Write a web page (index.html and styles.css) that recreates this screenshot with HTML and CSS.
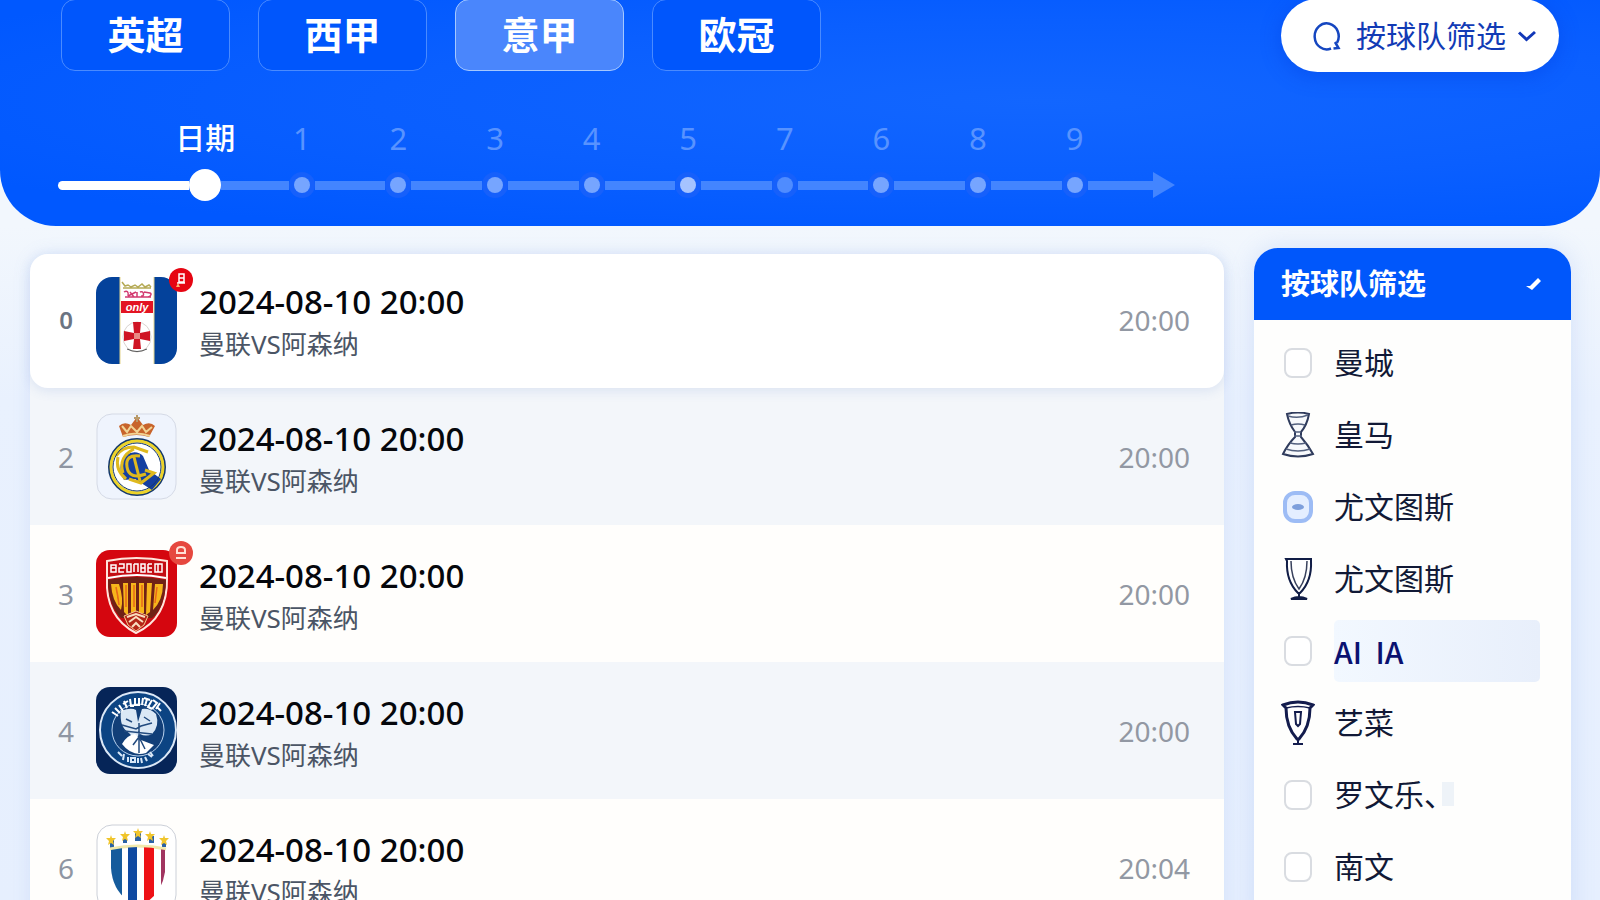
FILE: index.html
```
<!DOCTYPE html>
<html lang="zh-CN">
<head>
    <meta charset="UTF-8">
    <meta name="viewport" content="width=device-width, initial-scale=1.0">
    <title>赛程</title>
    <link rel="stylesheet" href="styles.css">
</head>
<body>
    <header class="top">
        <div class="top-row">
            <nav class="leagues">
                <button class="league">英超</button>
                <button class="league">西甲</button>
                <button class="league active">意甲</button>
                <button class="league">欧冠</button>
            </nav>
            <button class="filter-btn">
                <svg class="search-icon" viewBox="0 0 30 32">
                    <path d="M19 28.500A12 13 0 1 1 25 23" />
                    <path d="M23 22L26.500 28L21.500 28.500" />
                </svg>
                <span>按球队筛选</span>
                <svg class="chevron-icon" viewBox="0 0 20 14"><path d="M2 3.500L9.500 10.500L18 3" /></svg>
            </button>
        </div>

        <div class="timeline">
            <span class="lead"></span>
            <label class="step current"><span>日期</span><span class="rail"><input type="radio" name="day" checked></span></label>
            <label class="step"><span>1</span><span class="rail"><input type="radio" name="day"></span></label>
            <label class="step"><span>2</span><span class="rail"><input type="radio" name="day"></span></label>
            <label class="step"><span>3</span><span class="rail"><input type="radio" name="day"></span></label>
            <label class="step"><span>4</span><span class="rail"><input type="radio" name="day"></span></label>
            <label class="step bright"><span>5</span><span class="rail"><input type="radio" name="day"></span></label>
            <label class="step dim"><span>7</span><span class="rail"><input type="radio" name="day"></span></label>
            <label class="step"><span>6</span><span class="rail"><input type="radio" name="day"></span></label>
            <label class="step"><span>8</span><span class="rail"><input type="radio" name="day"></span></label>
            <label class="step"><span>9</span><span class="rail"><input type="radio" name="day"></span></label>
            <span class="tail"></span>
        </div>
    </header>

    <main class="page">
        <section class="matches">
            <article class="match featured">
                <span class="num">0</span>
                <div class="crest">
                    <svg viewBox="0 0 81 87">
                        <rect width="81" height="87" rx="16" fill="#04429b" />
                        <rect x="24" y="0" width="34" height="87" fill="#fff" />
                        <path d="M24 0V87M58 0V87" stroke="#e3d48c" fill="none" />
                        <path d="M26 5l3 4 3-1 3 2 4-2 3 2 4-3 3 3 4-2 2 2M27 11h28" stroke="#b5aa55" stroke-width="1.500" fill="none" />
                        <path d="M28 15c3-2 5 0 4 4m2-4l4 5m-6-1l8-4m1 0v5m3-5c4-2 5 5 1 4m3-4l6 1c2 1 1 3-2 4M29 20h26" stroke="#d23a70" stroke-width="1.500" fill="none" />
                        <rect x="25" y="24" width="32" height="12" fill="#e31422" />
                        <text x="41" y="34" font-size="11" text-anchor="middle" class="crest-text">only</text>
                        <ellipse cx="41" cy="60" rx="14" ry="15" fill="#fff" stroke="#d9d3cf" />
                        <path d="M37 45h8l-1 11 10-2v10l-10-2 1 10h-8l1-10-10 2V54l10 2z" fill="#cf1424" />
                        <rect x="38" y="56" width="6" height="6" fill="#e98a84" />
                        <path d="M31 72q10 5 20 0" stroke="#555" fill="none" />
                    </svg>
                    <span class="tag">
                        <svg viewBox="0 0 24 24"><path d="M10 6h5v8h-5zM10 10h5M8 15h8" stroke="#fff" stroke-width="1.500" fill="none" /><path d="M9 15l2 4-4 0z" fill="#ffb36b" /></svg>
                    </span>
                </div>
                <div class="info">
                    <h3>2024-08-10 20:00</h3>
                    <p>曼联VS阿森纳</p>
                </div>
                <time>20:00</time>
            </article>

            <article class="match">
                <span class="num">2</span>
                <div class="crest">
                    <svg viewBox="0 0 81 87">
                        <rect x="1" y="1" width="79" height="85" rx="15" fill="#eff4fd" stroke="#d5dae6" />
                        <path d="M27 24L23 13q5-5 12-1l6-8 6 8q7-4 12 1l-6 11q-12-4-26 0z" fill="#c8642b" />
                        <path d="M27 23q13-5 27 0M26 13l5 6 4-6 6 6 5-6 4 6 6-5" stroke="#f2d494" stroke-width="2" fill="none" />
                        <path d="M41 2v7M38 5h6" stroke="#b99b6b" stroke-width="2" />
                        <circle cx="41" cy="54" r="28" fill="#fff" stroke="#15396c" stroke-width="2" />
                        <circle cx="41" cy="54" r="26" fill="none" stroke="#ecd32a" stroke-width="3" />
                        <path d="M30 42q10-6 17 1l6 14 12 9-9 11-17-11-11 1q-8-14 2-25z" fill="#143fa0" />
                        <path d="M20 43q6-9 18-9l14 5M38 36q-16 8-11 24M44 43q-15-2-13 11t19 7M38 44l6 24M33 66l12 4 13-10-9-3" stroke="#dfb91e" stroke-width="3" fill="none" />
                        <path d="M22 44q-3 13 8 22" stroke="#dfb91e" stroke-width="3" fill="none" />
                        <circle cx="41" cy="54" r="24" fill="none" stroke="#15396c" />
                    </svg>
                </div>
                <div class="info">
                    <h3>2024-08-10 20:00</h3>
                    <p>曼联VS阿森纳</p>
                </div>
                <time>20:00</time>
            </article>

            <article class="match">
                <span class="num">3</span>
                <div class="crest">
                    <svg viewBox="0 0 81 87">
                        <rect width="81" height="87" rx="14" fill="#d5060f" />
                        <path d="M11 11q29-6 60 0v17q1 40-31 55Q9 67 11 28z" fill="#c40d13" stroke="#ffe5dc" stroke-width="2" />
                        <path d="M12 30q28-6 58 0-1 28-14 38H25Q12 55 12 30z" fill="#702116" />
                        <path d="M12 28q29-6 58 0" stroke="#fff" stroke-width="2" fill="none" />
                        <path d="M15 15h5v7h-5zm0 3h5M23 14h5v4h-5v4h5M31 14v8h4v-8zM38 14v8m0-8h4v8M45 14h4v8h-4zm0 4h4M52 14v8h4m-4-4h4m-4-4h4M59 14h7v8h-7zm3 0v8" stroke="#fff" stroke-width="1.500" fill="none" />
                        <path d="M15 34h8q5 15 2 26-9-9-10-26zM27 33h5v33l-4-4zM35 33h5v30h-5zM43 33h5v30h-5zM51 33h5l-2 29-4 3zM59 34h8q0 16-10 26z" fill="#f7b51b" />
                        <path d="M20 37q2 9 3 18M30 35v22M38 35v22M46 35v22M61 37l-2 16" stroke="#e8681a" stroke-width="1.500" />
                        <path d="M28 66l12-5 12 5-4 9-8 6-8-6z" fill="#b32516" stroke="#f4c78e" />
                        <path d="M31 67l9-3 9 3M33 72l7-5 7 5M36 77l4-4 4 4" stroke="#f9dec0" stroke-width="2" fill="none" />
                    </svg>
                    <span class="tag soft">
                        <svg viewBox="0 0 24 24"><path d="M8 11V9q0-3 4-3t4 3v2M7 12h10M7 17h10" stroke="#ffe1d6" stroke-width="2" fill="none" /></svg>
                    </span>
                </div>
                <div class="info">
                    <h3>2024-08-10 20:00</h3>
                    <p>曼联VS阿森纳</p>
                </div>
                <time>20:00</time>
            </article>

            <article class="match">
                <span class="num">4</span>
                <div class="crest">
                    <svg viewBox="0 0 81 87">
                        <rect width="81" height="87" rx="14" fill="#062558" />
                        <circle cx="42" cy="43" r="38" fill="#0c4483" stroke="#dbe8f7" stroke-width="2" />
                        <circle cx="42" cy="43" r="26" fill="#123f78" stroke="#b9d2ee" />
                        <path d="M25 24q10-4 15-1l2 12 4-13q8-1 14 5 4 12-4 20-6 3-12 0l-5 5-6-6q-10-6-8-22z" fill="#dbe8f5" />
                        <path d="M26 57q5-9 13-10l6 6 13 5-8 8q-14 4-24-9z" fill="#fff" />
                        <path d="M26 38l14 4 5-3 11-3M28 44l28 3M30 32l6 3M48 30l6 4M43 36v30M37 58l6-8 6 12" stroke="#234b7f" stroke-width="1.500" fill="none" />
                        <path d="M16 25l6 4m-3-8l5 5m-1-8l4 6m1-10l3 7m-4-4l5-3m2-2l1 7h3m1-8v7h4v-7m4 0l-1 7m5-6l-2 7m-1-8l6 2m2 0l-4 7 4 2m1-9l4 3-5 6m5-2l4 4m-1-8l-4 6" stroke="#fff" stroke-width="2" fill="none" />
                        <path d="M22 65l4 4m2-2l-1 6m5-3v5m3-4h4v4h-4zm7 0v5m3-5l1 5m3-6l2 4m1-7l4 3m-2-5l3 4" stroke="#d8e7f7" stroke-width="2" fill="none" />
                    </svg>
                </div>
                <div class="info">
                    <h3>2024-08-10 20:00</h3>
                    <p>曼联VS阿森纳</p>
                </div>
                <time>20:00</time>
            </article>

            <article class="match">
                <span class="num">6</span>
                <div class="crest">
                    <svg viewBox="0 0 81 87">
                        <defs>
                            <clipPath id="shield"><path d="M15 26q27-6 54 0v22q-4 26-27 34Q17 72 15 44z" /></clipPath>
                            <path id="star" d="M0-5L1-2H5L2 1 3 5 0 3-3 5-2 1-5-2H-1z" />
                        </defs>
                        <rect x="1" y="1" width="79" height="85" rx="15" fill="#fff" stroke="#ccd0d8" />
                        <path d="M14 16h4v9h-4zM27 12h4v7h-4zM39 9h6v8h-6zM53 12h5v7h-5zM66 16h4v7h-4z" fill="#2a62a5" />
                        <g fill="#f0c52c">
                            <use href="#star" x="15" y="16" />
                            <use href="#star" x="29" y="12" />
                            <use href="#star" x="42" y="9" />
                            <use href="#star" x="54" y="12" />
                            <use href="#star" x="68" y="16" />
                        </g>
                        <path d="M14 25q28-6 56 0" stroke="#f1e9ad" stroke-width="3" fill="none" />
                        <g clip-path="url(#shield)">
                            <path d="M14 20h12v67H14z" fill="#155b9c" />
                            <path d="M32 20h9v67h-9z" fill="#0e49a1" />
                            <path d="M48 20h10v67H48z" fill="#ee1116" />
                            <path d="M65 20h5v67h-5z" fill="#a13560" />
                        </g>
                    </svg>
                </div>
                <div class="info">
                    <h3>2024-08-10 20:00</h3>
                    <p>曼联VS阿森纳</p>
                </div>
                <time>20:04</time>
            </article>
        </section>

        <aside class="teams">
            <button class="teams-head">
                <span>按球队筛选</span>
                <svg viewBox="0 0 16 14"><path d="M0 9l4 0L12 1l3 3L6 13z" fill="#fff" /></svg>
            </button>
            <ul>
                <li><label><span class="mark"><input type="checkbox"></span><span class="name">曼城</span></label></li>
                <li>
                    <a href="#">
                        <span class="mark">
                            <svg viewBox="0 0 34 46">
                                <path d="M6 2q11-3 22 0-2 11-8 18v5q7 8 12 17-15 5-30 0 5-10 12-17v-5Q8 12 6 2z" fill="#f7f9fc" stroke="#2f3b5c" stroke-width="2" />
                                <path d="M7 4q10 3 20-1M10 13q7-2 14 0M13 20h7M13 24h8M9 31q8 2 16 0M5 37q12 4 24 0" stroke="#53607e" stroke-width="1.500" fill="none" />
                            </svg>
                        </span>
                        <span class="name">皇马</span>
                    </a>
                </li>
                <li><label><span class="mark"><input type="checkbox" checked></span><span class="name">尤文图斯</span></label></li>
                <li>
                    <a href="#">
                        <span class="mark">
                            <svg viewBox="0 0 34 46">
                                <path d="M5 3h25v2q1 20-11 32h-2Q5 25 6 5z" fill="#fff" stroke="#111d46" stroke-width="2" />
                                <path d="M10 5q0 17 8 28 8-11 8-28" stroke="#39425d" stroke-width="1.500" fill="none" />
                                <path d="M18 36v6M10 43q8-4 16 0z" stroke="#111d46" stroke-width="2" fill="#111d46" />
                            </svg>
                        </span>
                        <span class="name">尤文图斯</span>
                    </a>
                </li>
                <li class="hover"><label><span class="mark"><input type="checkbox"></span><span class="name">AI&nbsp; IA</span></label></li>
                <li>
                    <a href="#">
                        <span class="mark">
                            <svg viewBox="0 0 34 46">
                                <path d="M2 5q15-6 30 0l-3 3q0 19-11 31h-2Q5 27 5 8z" fill="#fff" stroke="#131c4d" stroke-width="3" />
                                <path d="M5 8q12-3 24 0" stroke="#131c4d" stroke-width="1.500" fill="none" />
                                <path d="M14 12h6l-1 12-2 2-2-2z" stroke="#131c4d" stroke-width="2" fill="none" />
                                <path d="M17 38v5M12 44h10" stroke="#131c4d" stroke-width="2" />
                            </svg>
                        </span>
                        <span class="name">艺菜</span>
                    </a>
                </li>
                <li class="faded"><label><span class="mark"><input type="checkbox"></span><span class="name">罗文乐、</span></label></li>
                <li><label><span class="mark"><input type="checkbox"></span><span class="name">南文</span></label></li>
            </ul>
        </aside>
    </main>
</body>
</html>
```
FILE: styles.css
```
* {
    box-sizing: border-box;
}

body {
    font-family: "Noto Sans", "Noto Sans CJK SC", sans-serif;
    margin: 0;
    height: 100vh;
    overflow: hidden;
    background: linear-gradient(#f2f7fd 226px, #e9f1fe 400px, #e6effe);
}

button {
    font-family: inherit;
    border: none;
    cursor: pointer;
}

svg {
    display: block;
}

/* header */

.top {
    padding: 0 41px 25px 58px;
    border-radius: 0 0 56px 56px;
    background: radial-gradient(ellipse at 65% 45%, #1266ff, #0a5fff 45%, #0058ff 85%);
}

.top-row {
    display: flex;
    justify-content: space-between;
    margin-top: -1px;
    padding-left: 3px;
}

.leagues {
    display: flex;
    gap: 28px;
}

.league {
    width: 169px;
    height: 72px;
    padding: 0 0 3px;
    border: 1px solid #4a8bff;
    border-radius: 14px;
    background-color: #0056fc;
    color: white;
    font-size: 38px;
    font-weight: 600;
    line-height: 66px;
}

.league.active {
    background-color: #4a86fc;
    border-color: #a5c8ff;
}

.filter-btn {
    display: flex;
    align-items: center;
    height: 73px;
    padding: 0 22px 0 31px;
    border-radius: 37px;
    background-color: white;
    box-shadow: 0 4px 20px rgba(0, 60, 220, 0.4);
    color: #123bb5;
    font-size: 30px;
    line-height: 44px;
}

.search-icon {
    width: 30px;
    height: 32px;
    margin-right: 14px;
    fill: none;
    stroke: #1546c0;
    stroke-width: 2.5;
}

.chevron-icon {
    width: 20px;
    height: 14px;
    margin-left: 11px;
    fill: none;
    stroke: #1238b8;
    stroke-width: 3;
}

/* timeline */

.timeline {
    display: flex;
    align-items: flex-end;
    width: 74.4%;
    margin-top: 46px;
}

.lead,
.tail {
    display: flex;
    align-items: center;
    height: 32px;
}

.lead {
    width: 99px;
}

.tail {
    width: 52px;
}

.lead::before,
.tail::before {
    content: "";
    flex: 1;
    height: 9px;
    background-color: #4385ff;
}

.lead::before {
    background-color: white;
    border-radius: 5px 0 0 5px;
}

.tail::after {
    content: "";
    border-left: 22px solid #4385ff;
    border-top: 13px solid transparent;
    border-bottom: 13px solid transparent;
}

.step {
    flex: 1;
    display: flex;
    flex-direction: column;
    gap: 11px;
    color: #5893ff;
    font-size: 31px;
    line-height: 40px;
    text-align: center;
    white-space: nowrap;
}

.step.current {
    color: white;
    font-size: 30px;
    font-weight: 500;
}

.rail {
    display: flex;
    align-items: center;
    height: 32px;
}

.rail::before,
.rail::after {
    content: "";
    flex: 1;
    height: 9px;
    background-color: #4385ff;
}

.rail input {
    appearance: none;
    width: 16px;
    height: 16px;
    margin: 0 5px;
    border-radius: 50%;
    background-color: #76a5ff;
    box-shadow: 0 0 0 5px #1660fb;
}

.bright input {
    background-color: #a5c3ff;
}

.dim input {
    background-color: #4f8cff;
}

.current .rail::before {
    background-color: white;
}

.current .rail input {
    width: 32px;
    height: 32px;
    margin: 0;
    background-color: white;
    box-shadow: none;
}

/* content */

.page {
    display: flex;
    align-items: flex-start;
    gap: 30px;
    padding: 22px 29px 0 30px;
}

.matches {
    flex: 1;
    margin-top: 6px;
    border-radius: 18px;
    background-color: #f3f6fa;
    box-shadow: 0 0 18px rgba(110, 150, 230, 0.15);
}

.match {
    display: flex;
    align-items: center;
    height: 137px;
    padding: 0 34px 0 22px;
}

.match:nth-child(odd) {
    background-color: #fffefc;
}

.match.featured {
    height: 134px;
    padding-bottom: 2px;
    border-radius: 18px;
    background-color: white;
    box-shadow: 0 3px 12px rgba(80, 120, 200, 0.14);
}

.num {
    width: 28px;
    margin-right: 16px;
    color: #8f96a3;
    font-size: 28px;
    line-height: 40px;
    text-align: center;
}

.featured .num {
    color: #6b7482;
    font-size: 24px;
    font-weight: 600;
}

.crest {
    position: relative;
    width: 81px;
    height: 87px;
    margin-right: 22px;
}

.crest-text {
    fill: white;
    font-family: "Liberation Sans", sans-serif;
    font-weight: bold;
    font-style: italic;
}

.tag {
    position: absolute;
    top: -9px;
    right: -16px;
    width: 24px;
    height: 24px;
    border-radius: 50%;
    background-color: #e60512;
}

.tag.soft {
    background-color: #e6483f;
}

.info {
    flex: 1;
    padding-top: 6px;
}

.info h3 {
    margin: 0;
    color: #05070c;
    font-size: 33px;
    font-weight: 500;
    line-height: 42px;
}

.info p {
    margin: 0;
    color: #4b5565;
    font-size: 26px;
    line-height: 42px;
}

.match time {
    color: #9298a3;
    font-size: 28px;
    line-height: 40px;
}

/* team filter */

.teams {
    width: 317px;
    border-radius: 24px 24px 0 0;
    background-color: #fefefd;
    box-shadow: 0 0 24px rgba(110, 150, 230, 0.2);
}

.teams-head {
    display: flex;
    align-items: center;
    justify-content: space-between;
    width: 100%;
    height: 72px;
    padding: 0 29px 0 27px;
    border-radius: 24px 24px 0 0;
    background-color: #0057fb;
    color: white;
    font-size: 29px;
    font-weight: 600;
    line-height: 44px;
}

.teams-head svg {
    width: 16px;
    height: 14px;
}

.teams ul {
    list-style: none;
    margin: 0;
    padding: 7px 31px 20px 27px;
}

.teams label,
.teams a {
    display: flex;
    align-items: center;
    height: 72px;
    color: #111936;
    font-size: 30px;
    text-decoration: none;
}

.mark {
    display: flex;
    justify-content: center;
    width: 34px;
    margin-right: 19px;
}

.mark svg {
    width: 34px;
    height: 46px;
}

.mark input {
    appearance: none;
    width: 28px;
    height: 30px;
    margin: 0;
    border: 2px solid #d9dce1;
    border-radius: 8px;
    background-color: white;
}

.mark input:checked {
    display: grid;
    place-items: center;
    width: 30px;
    height: 32px;
    border: 4px solid #9dbcf5;
    border-radius: 12px;
    background-color: #e4eeff;
}

.mark input:checked::after {
    content: "";
    width: 12px;
    height: 6px;
    border-radius: 50%;
    background-color: #7d9fdc;
}

.name {
    flex: 1;
    line-height: 62px;
}

.hover .name {
    border-radius: 5px;
    background: linear-gradient(90deg, #f2f8ff, #e8effb);
    color: #0a1170;
    font-family: "Noto Sans CJK SC", sans-serif;
    font-weight: 500;
}

.faded .name::after {
    content: "";
    display: inline-block;
    width: 12px;
    height: 24px;
    margin-left: -12px;
    background-color: #eef3f8;
}
```
